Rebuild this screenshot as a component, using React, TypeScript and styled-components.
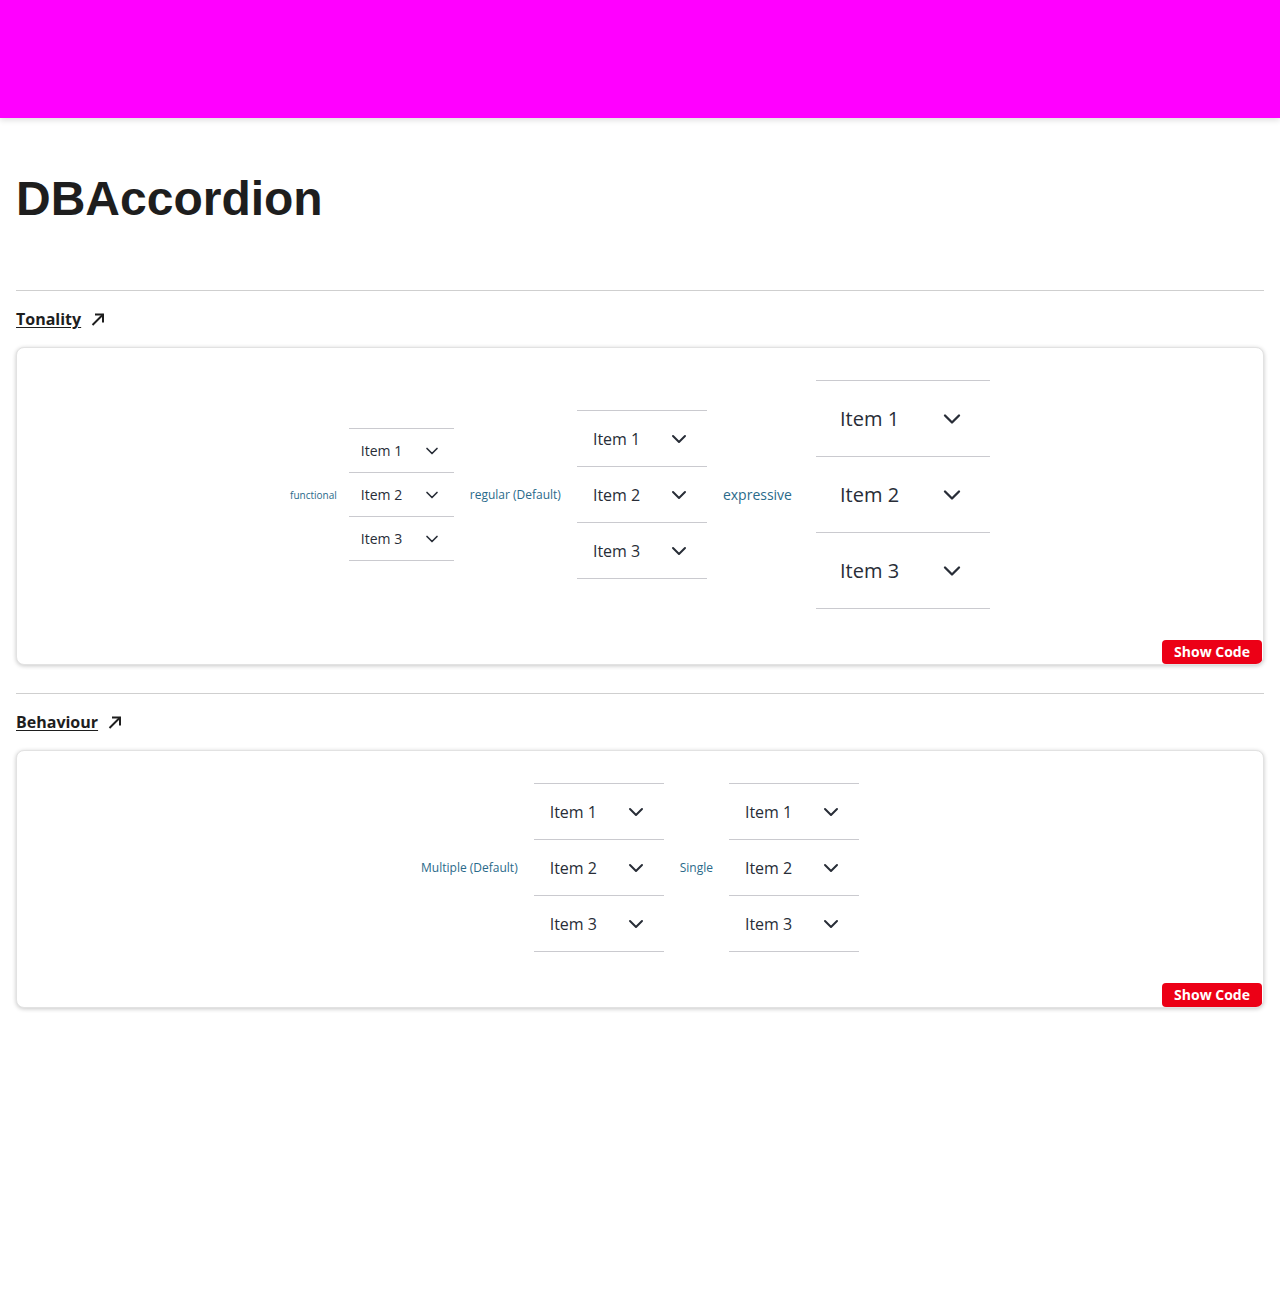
import React from "react";
import styled, { createGlobalStyle } from "styled-components";

// DBAccordion showcase page

type Size = "functional" | "regular" | "expressive";

const sizes: Record<Size, { font: number; height: number; width: number; pad: number; icon: number }> = {
  functional: { font: 14, height: 43, width: 105, pad: 12, icon: 20 },
  regular: { font: 16, height: 55, width: 130, pad: 16, icon: 24 },
  expressive: { font: 20, height: 75, width: 174, pad: 24, icon: 28 },
};

const GlobalStyle = createGlobalStyle`
  body {
    margin: 0;
    font-family: "Open Sans", "Noto Sans", sans-serif;
    color: #282d37;
    background: #fff;
  }
`;

const Header = styled.header`
  height: 118px;
  background: #ff00ff;
  box-shadow: 0 2px 6px rgba(0, 0, 0, 0.14);
`;

const Main = styled.main`
  padding: 0 16px 40px;
`;

const Title = styled.h1`
  margin: 53px 0 63px;
  font-family: "Liberation Sans", "Open Sans", sans-serif;
  font-weight: 700;
  font-size: 48px;
  line-height: 56px;
  color: #1e1e1e;
`;

const Section = styled.section`
  border-top: 1px solid #cfcfcf;
  & + & {
    margin-top: 28px;
  }
`;

const SectionLink = styled.a`
  display: inline-flex;
  align-items: center;
  gap: 9px;
  margin: 16px 0 16px;
  font-size: 16px;
  line-height: 24px;
  font-weight: 700;
  color: #1e1e1e;
  text-decoration: underline;
  text-underline-offset: 2px;
`;

const Card = styled.div`
  display: flex;
  flex-direction: column;
  background: #fff;
  border: 1px solid #e2e2e2;
  border-radius: 8px;
  box-shadow: 0 1px 4px rgba(0, 0, 0, 0.22);
  overflow: hidden;
`;

const Stage = styled.div`
  display: flex;
  justify-content: center;
  align-items: center;
  gap: 16px;
  padding: 32px 32px 31px;
`;

const Variant = styled.div<{ $gap: number }>`
  display: flex;
  align-items: center;
  gap: ${(p) => p.$gap}px;
`;

const Label = styled.span<{ $size: number }>`
  font-size: ${(p) => p.$size}px;
  color: #2a6a8a;
  white-space: nowrap;
`;

const AccordionList = styled.ul<{ $width: number }>`
  list-style: none;
  margin: 0;
  padding: 0;
  width: ${(p) => p.$width}px;
`;

const AccordionItem = styled.li<{ $height: number; $pad: number; $font: number }>`
  display: flex;
  align-items: center;
  justify-content: space-between;
  height: ${(p) => p.$height}px;
  padding: 0 ${(p) => p.$pad}px;
  border-top: 1px solid #cacacf;
  font-size: ${(p) => p.$font}px;
  color: #282d37;
  &:last-child {
    border-bottom: 1px solid #cacacf;
  }
`;

const ButtonRow = styled.div`
  display: flex;
  justify-content: flex-end;
`;

const ShowCode = styled.button`
  height: 24px;
  padding: 0 12px;
  border: 0;
  border-radius: 4px;
  background: #ec0016;
  color: #fff;
  font-family: "Open Sans", "Noto Sans", sans-serif;
  font-weight: 700;
  font-size: 14px;
  line-height: 24px;
  margin-right: 1px;
`;

const Chevron = ({ size }: { size: number }) => (
  <svg width={size} height={size} viewBox="0 0 24 24" fill="none" stroke="#282d37" strokeWidth={2} strokeLinecap="round" strokeLinejoin="round">
    <path d="M6 9l6 6 6-6" />
  </svg>
);

const ArrowUpRight = () => (
  <svg width="16" height="16" viewBox="0 0 16 16" fill="none" stroke="#1e1e1e" strokeWidth={2}>
    <path d="M2.5 14L13 3.5" />
    <path d="M5 3.5h8v8" />
  </svg>
);

const Accordion = ({ size }: { size: Size }) => {
  const s = sizes[size];
  return (
    <AccordionList $width={s.width}>
      {["Item 1", "Item 2", "Item 3"].map((t) => (
        <AccordionItem key={t} $height={s.height} $pad={s.pad} $font={s.font}>
          <span>{t}</span>
          <Chevron size={s.icon} />
        </AccordionItem>
      ))}
    </AccordionList>
  );
};

export default function App() {
  return (
    <>
      <GlobalStyle />
      <Header />
      <Main>
        <Title>DBAccordion</Title>
        <Section>
          <SectionLink href="#tonality">
            Tonality
            <ArrowUpRight />
          </SectionLink>
          <Card>
            <Stage>
              <Variant $gap={12}>
                <Label $size={10}>functional</Label>
                <Accordion size="functional" />
              </Variant>
              <Variant $gap={16}>
                <Label $size={12}>regular (Default)</Label>
                <Accordion size="regular" />
              </Variant>
              <Variant $gap={24}>
                <Label $size={14}>expressive</Label>
                <Accordion size="expressive" />
              </Variant>
            </Stage>
            <ButtonRow>
              <ShowCode>Show Code</ShowCode>
            </ButtonRow>
          </Card>
        </Section>
        <Section>
          <SectionLink href="#behaviour">
            Behaviour
            <ArrowUpRight />
          </SectionLink>
          <Card>
            <Stage>
              <Variant $gap={16}>
                <Label $size={12}>Multiple (Default)</Label>
                <Accordion size="regular" />
              </Variant>
              <Variant $gap={16}>
                <Label $size={12}>Single</Label>
                <Accordion size="regular" />
              </Variant>
            </Stage>
            <ButtonRow>
              <ShowCode>Show Code</ShowCode>
            </ButtonRow>
          </Card>
        </Section>
      </Main>
    </>
  );
}
